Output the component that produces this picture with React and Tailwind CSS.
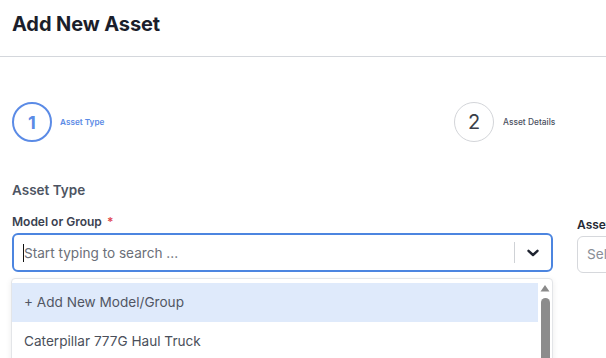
import React from "react";

export default function App() {
  return (
    <div className="w-[606px] h-[358px] overflow-hidden bg-white font-[family-name:Inter,sans-serif] relative">
      <div className="h-[57px] border-b border-[#d4d7dc] px-3">
        <h1 className="pt-3 leading-6 text-[20px] font-bold text-[#1b1e2b] tracking-[-0.1px]">Add New Asset</h1>
      </div>

      <div className="px-3 pt-[45px] grid grid-cols-[442px_1fr] w-[800px]">
        <div className="flex items-center gap-2">
          <div className="w-10 h-10 rounded-full border-2 border-[#5b8be6] flex items-center justify-center text-[18px] font-bold text-[#5b8be6]">1</div>
          <span className="text-[8.2px] font-semibold text-[#5b8be6]">Asset Type</span>
        </div>
        <div className="flex items-center gap-[9px]">
          <div className="w-10 h-10 rounded-full border-[1.5px] border-[#d3d5d9] flex items-center justify-center text-[20px] text-[#3a3e48]">2</div>
          <span className="text-[8.4px] font-medium text-[#4b5060]">Asset Details</span>
        </div>
      </div>

      <div className="px-3 pt-[40px]">
        <h2 className="text-[13.5px] leading-4 font-semibold text-[#4d5462]">Asset Type</h2>
        <div className="flex gap-6 mt-[16px] w-[800px]">
          <div className="w-[541px] shrink-0 relative">
            <label className="block text-[12px] leading-4 font-semibold text-[#3b4150]">
              Model or Group <span className="text-[#e0474f] ml-[2px]">*</span>
            </label>
            <div className="mt-[3px] h-[39px] rounded-[6px] border-2 border-[#4c85e0] flex items-center">
              <div className="flex-1 pl-[9px] pt-[2px] flex items-center">
                <span className="w-px h-[18px] bg-[#111]"></span>
                <span className="text-[13.6px] text-[#6b6f78]">Start typing to search ...</span>
              </div>
              <div className="w-px h-[21px] bg-[#cfd2d6]"></div>
              <div className="w-[36px] flex items-center justify-center">
                <svg width="12" height="8" viewBox="0 0 12 8" fill="none">
                  <path d="M1.5 1.8 L6 6 L10.5 1.8" stroke="#1f2430" strokeWidth="2.4" strokeLinecap="round" strokeLinejoin="round" />
                </svg>
              </div>
            </div>

            <div className="absolute left-[-1px] top-[64px] w-[542px] h-[90px] bg-white border border-[#e3e5e8] rounded-[4px] shadow-[0_2px_6px_rgba(0,0,0,0.08)] pt-[4px] flex">
              <div className="flex-1">
                <div className="h-[39px] bg-[#dfeafb] flex items-center pl-3 text-[13.6px] text-[#515663]">+ Add New Model/Group</div>
                <div className="h-[39px] flex items-center pl-3 text-[13.6px] text-[#4a4f5a]">Caterpillar 777G Haul Truck</div>
              </div>
              <div className="w-[14px] flex flex-col items-center pt-[1px]">
                <svg width="10" height="8" viewBox="0 0 10 8">
                  <path d="M5 1 L9.5 7.5 L0.5 7.5 Z" fill="#8a8a8a" />
                </svg>
                <div className="mt-[6px] w-[9px] flex-1 bg-[#8c8c8c] rounded-t-[5px]"></div>
              </div>
            </div>
          </div>

          <div className="w-[200px] shrink-0 pt-[3px]">
            <label className="block text-[12px] leading-4 font-semibold text-[#262a35]">Asset Category</label>
            <div className="mt-[3px] h-[37px] rounded-[6px] border border-[#d6d8dc] flex items-center pl-[9px] text-[13.6px] text-[#8a8e96]">Select ...</div>
          </div>
        </div>
      </div>
    </div>
  );
}
